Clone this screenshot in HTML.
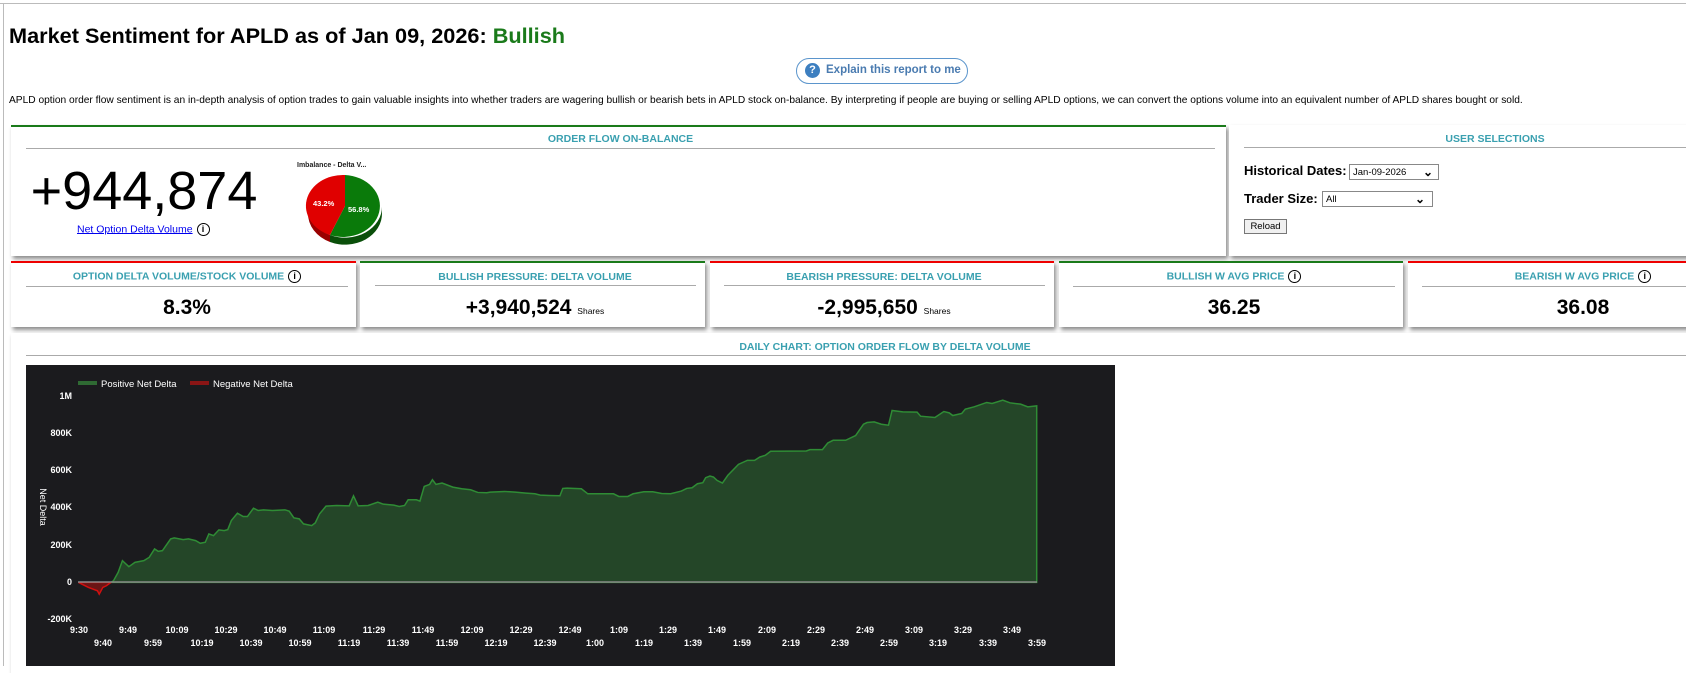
<!DOCTYPE html>
<html><head><meta charset="utf-8"><style>
*{margin:0;padding:0;box-sizing:border-box}
body{width:1686px;height:666px;overflow:hidden;background:#fff;font-family:"Liberation Sans",Arial,sans-serif;position:relative}
.a{position:absolute}
.box{position:absolute;background:#fff;box-shadow:2px 3px 4px rgba(0,0,0,.45)}
.hd{position:absolute;color:#3aa0b0;font-weight:bold;font-size:10.5px;text-align:center;white-space:nowrap}
.ln{position:absolute;height:1px;background:#aaa}
.val{position:absolute;font-weight:bold;font-size:21px;text-align:center;white-space:nowrap}
.info{display:inline-block;width:13px;height:13px;border:1.3px solid #000;border-radius:50%;font-size:9px;line-height:11px;text-align:center;color:#000;font-weight:bold;vertical-align:middle;margin-left:4px}
.sel{position:absolute;border:1px solid #888;background:#fff;font-size:9.5px;padding:2px 3px}
</style></head><body>
<div class="a" style="left:0;top:3px;width:1686px;height:1px;background:#bbb"></div>
<div class="a" style="left:3px;top:3px;width:1px;height:663px;background:#bbb"></div>

<div class="a" style="left:9px;top:23px;font-size:21.7px;font-weight:bold;white-space:nowrap">Market Sentiment for APLD as of Jan 09, 2026: <span style="color:#1a7a1a">Bullish</span></div>

<div class="a" style="left:796px;top:58px;width:172px;height:26px;border:1.5px solid #5b95cc;border-radius:13px"></div>
<div class="a" style="left:805px;top:63px;width:15px;height:15px;border-radius:50%;background:#3d7fc0;color:#fff;font-size:11px;font-weight:bold;text-align:center;line-height:15px">?</div>
<div class="a" style="left:826px;top:64px;font-size:11.5px;font-weight:bold;color:#4a7bb0;white-space:nowrap">Explain this report to me</div>

<div class="a" style="left:9px;top:95px;font-size:10.2px;white-space:nowrap">APLD option order flow sentiment is an in-depth analysis of option trades to gain valuable insights into whether traders are wagering bullish or bearish bets in APLD stock on-balance. By interpreting if people are buying or selling APLD options, we can convert the options volume into an equivalent number of APLD shares bought or sold.</div>

<!-- order flow box -->
<div class="box" style="left:11px;top:125px;width:1215px;height:131px;border-top:2px solid #1a7a1a"></div>
<div class="hd" style="left:26px;top:133px;width:1189px">ORDER FLOW ON-BALANCE</div>
<div class="ln" style="left:26px;top:148px;width:1189px"></div>
<div class="a" style="left:26px;top:162px;width:236px;text-align:center;font-size:54px;line-height:58px">+944,874</div>
<div class="a" style="left:77px;top:223px;font-size:10.5px;white-space:nowrap"><span style="color:#00e;text-decoration:underline">Net Option Delta Volume</span><span class="info">i</span></div>
<div class="a" style="left:297px;top:162px;font-size:7px;font-weight:bold;color:#222">Imbalance - Delta V...</div>
<svg class="a" style="left:300px;top:170px" width="90" height="80" viewBox="300 170 90 80">
<path d="M382 206 A37 31 0 0 1 330 235 L330 242 A37 31 0 0 0 382 213Z" fill="#0a4f0a"/>
<path d="M330 235 A37 31 0 0 1 308 206 L308 213 A37 31 0 0 0 330 242Z" fill="#9a0000"/>
<path d="M345 206 L345 175 A37 31 0 1 1 330 235Z" fill="#0a7a0a"/>
<path d="M345 206 L330 235 A37 31 0 0 1 345 175Z" fill="#e00000"/>
<text x="313" y="206" font-size="7.5" font-weight="bold" fill="#fff" font-family="Liberation Sans">43.2%</text>
<text x="348" y="212" font-size="7.5" font-weight="bold" fill="#fff" font-family="Liberation Sans">56.8%</text>
</svg>

<!-- user selections -->
<div class="box" style="left:1229px;top:125px;width:470px;height:131px"></div>
<div class="hd" style="left:1244px;top:133px;width:502px">USER SELECTIONS</div>
<div class="ln" style="left:1244px;top:147px;width:450px"></div>
<div class="a" style="left:1244px;top:163px;font-size:13px;font-weight:bold">Historical Dates:</div>
<div class="sel" style="left:1349px;top:164px;width:90px;height:16px">Jan-09-2026 <span style="position:absolute;right:5px;top:0;font-size:12px;font-weight:bold">&#8964;</span></div>
<div class="a" style="left:1244px;top:191px;font-size:13px;font-weight:bold">Trader Size:</div>
<div class="sel" style="left:1322px;top:191px;width:111px;height:16px">All<span style="position:absolute;right:7px;top:0;font-size:12px;font-weight:bold">&#8964;</span></div>
<div class="a" style="left:1244px;top:219px;width:43px;height:15px;border:1px solid #777;background:#f0f0f0;font-size:9.5px;text-align:center;line-height:13px">Reload</div>

<!-- metric boxes -->
<div class="box" style="left:11px;top:261px;width:345px;height:66px;border-top:2px solid #e00"></div>
<div class="box" style="left:360px;top:261px;width:345px;height:66px;border-top:2px solid #1a7a1a"></div>
<div class="box" style="left:710px;top:261px;width:344px;height:66px;border-top:2px solid #e00"></div>
<div class="box" style="left:1059px;top:261px;width:344px;height:66px;border-top:2px solid #1a7a1a"></div>
<div class="box" style="left:1408px;top:261px;width:290px;height:66px;border-top:2px solid #e00"></div>

<div class="hd" style="left:26px;top:270px;width:322px">OPTION DELTA VOLUME/STOCK VOLUME<span class="info">i</span></div>
<div class="ln" style="left:26px;top:286px;width:322px"></div>
<div class="val" style="left:26px;top:296px;width:322px">8.3%</div>

<div class="hd" style="left:375px;top:271px;width:320px">BULLISH PRESSURE: DELTA VOLUME</div>
<div class="ln" style="left:375px;top:285px;width:321px"></div>
<div class="val" style="left:375px;top:296px;width:320px">+3,940,524 <span style="font-size:8.5px;font-weight:normal">Shares</span></div>

<div class="hd" style="left:724px;top:271px;width:320px">BEARISH PRESSURE: DELTA VOLUME</div>
<div class="ln" style="left:724px;top:285px;width:321px"></div>
<div class="val" style="left:724px;top:296px;width:320px">-2,995,650 <span style="font-size:8.5px;font-weight:normal">Shares</span></div>

<div class="hd" style="left:1073px;top:270px;width:322px">BULLISH W AVG PRICE<span class="info">i</span></div>
<div class="ln" style="left:1073px;top:286px;width:322px"></div>
<div class="val" style="left:1073px;top:296px;width:322px">36.25</div>

<div class="hd" style="left:1422px;top:270px;width:322px">BEARISH W AVG PRICE<span class="info">i</span></div>
<div class="ln" style="left:1422px;top:286px;width:270px"></div>
<div class="val" style="left:1422px;top:296px;width:322px">36.08</div>

<!-- chart panel -->
<div class="box" style="left:11px;top:333px;width:1690px;height:340px"></div>
<div class="hd" style="left:26px;top:341px;width:1718px">DAILY CHART: OPTION ORDER FLOW BY DELTA VOLUME</div>
<div class="ln" style="left:26px;top:355px;width:1670px"></div>

<svg class="a" style="left:26px;top:365px" width="1089" height="301" viewBox="26 365 1089 301" font-family="Liberation Sans" font-weight="bold">
<rect x="26" y="365" width="1089" height="301" fill="#1b1b1e"/>
<g transform="translate(26,360) scale(0.35714,0.33445)">
<path d="M238 665 L245 660 258 635 270 600 288 618 305 605 330 600 345 590 360 565 370 572 382 570 405 535 415 532 440 537 455 535 475 540 488 548 502 545 512 520 525 525 540 508 555 510 565 507 575 480 592 458 608 468 620 468 637 443 650 450 665 448 690 450 725 448 737 452 750 472 765 475 777 490 800 495 810 487 822 460 840 437 870 435 905 436 917 406 930 436 958 435 985 425 1000 431 1030 434 1045 438 1060 435 1070 418 1093 418 1103 422 1115 378 1130 372 1138 358 1148 372 1165 368 1195 380 1220 385 1245 388 1265 396 1290 397 1300 395 1340 393 1370 395 1400 398 1425 400 1440 404 1465 405 1495 406 1503 384 1515 383 1555 385 1573 400 1645 400 1660 408 1685 408 1700 400 1730 394 1755 394 1780 399 1805 400 1835 392 1850 384 1865 382 1880 370 1895 367 1903 352 1915 347 1925 350 1935 360 1950 368 1965 345 1995 312 2020 300 2040 300 2055 290 2070 285 2085 273 2185 272 2195 268 2230 268 2245 248 2260 240 2295 240 2323 226 2345 192 2355 187 2375 185 2395 192 2415 195 2425 151 2455 155 2495 156 2505 168 2545 172 2570 154 2585 158 2595 166 2620 160 2630 147 2655 140 2690 127 2705 130 2735 120 2755 128 2785 132 2805 140 2830 137 L2830 665Z" fill="#244628" stroke="#2f8c35" stroke-width="1.5" vector-effect="non-scaling-stroke"/>
<path d="M147 665 L175 680 200 690 205 700 215 680 225 675 238 665Z" fill="#6a1515" stroke="#d01010" stroke-width="1.5" vector-effect="non-scaling-stroke"/>
</g>
<line x1="78" y1="582" x2="1037" y2="582" stroke="#888" stroke-width="1.5"/>
<rect x="78" y="381" width="19" height="4" fill="#2f6a33"/>
<text x="101" y="387" font-size="9.5" fill="#fff" font-weight="normal">Positive Net Delta</text>
<rect x="190" y="381" width="19" height="4" fill="#8a1515"/>
<text x="213" y="387" font-size="9.5" fill="#fff" font-weight="normal">Negative Net Delta</text>
<g font-size="9" fill="#fff" text-anchor="end">
<text x="72" y="399">1M</text><text x="72" y="436">800K</text><text x="72" y="473">600K</text><text x="72" y="510">400K</text><text x="72" y="548">200K</text><text x="72" y="585">0</text><text x="72" y="622">-200K</text>
</g>
<text transform="translate(40,507) rotate(90)" font-size="9" fill="#fff" font-weight="normal" text-anchor="middle">Net Delta</text>
<g font-size="9" fill="#fff" text-anchor="middle">
<text x="79" y="633">9:30</text><text x="128" y="633">9:49</text><text x="177" y="633">10:09</text><text x="226" y="633">10:29</text><text x="275" y="633">10:49</text><text x="324" y="633">11:09</text><text x="374" y="633">11:29</text><text x="423" y="633">11:49</text><text x="472" y="633">12:09</text><text x="521" y="633">12:29</text><text x="570" y="633">12:49</text><text x="619" y="633">1:09</text><text x="668" y="633">1:29</text><text x="717" y="633">1:49</text><text x="767" y="633">2:09</text><text x="816" y="633">2:29</text><text x="865" y="633">2:49</text><text x="914" y="633">3:09</text><text x="963" y="633">3:29</text><text x="1012" y="633">3:49</text>
<text x="103" y="646">9:40</text><text x="153" y="646">9:59</text><text x="202" y="646">10:19</text><text x="251" y="646">10:39</text><text x="300" y="646">10:59</text><text x="349" y="646">11:19</text><text x="398" y="646">11:39</text><text x="447" y="646">11:59</text><text x="496" y="646">12:19</text><text x="545" y="646">12:39</text><text x="595" y="646">1:00</text><text x="644" y="646">1:19</text><text x="693" y="646">1:39</text><text x="742" y="646">1:59</text><text x="791" y="646">2:19</text><text x="840" y="646">2:39</text><text x="889" y="646">2:59</text><text x="938" y="646">3:19</text><text x="988" y="646">3:39</text><text x="1037" y="646">3:59</text>
</g>
</svg>
</body></html>
